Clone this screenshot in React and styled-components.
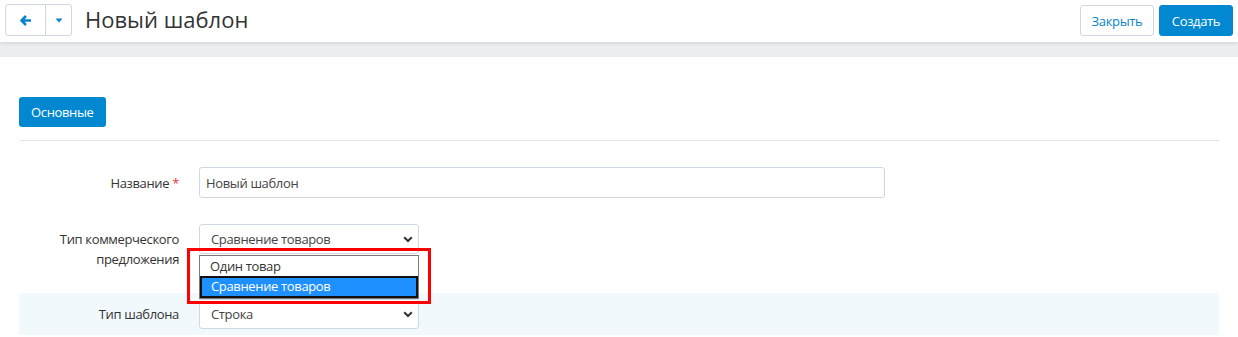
import React from 'react';
import styled, { createGlobalStyle } from 'styled-components';

const GlobalStyle = createGlobalStyle`
  body {
    margin: 0;
    background: #fff;
    font-family: "Open Sans", "Noto Sans", sans-serif;
    color: #333;
    letter-spacing: -0.35px;
  }
`;

const Page = styled.div`
  width: 1238px;
  height: 337px;
  overflow: hidden;
  background: #ebeef1;
`;

// Top bar
const TopBar = styled.header`
  display: flex;
  align-items: center;
  height: 42px;
  padding: 0 5px;
  background: #fff;
  box-shadow: 0 1px 4px rgba(0, 0, 0, 0.12);
  position: relative;
`;

const ButtonGroup = styled.div`
  display: flex;
  height: 32px;
  border: 1px solid #cfd8e2;
  border-radius: 3px;
  box-sizing: border-box;
  margin-top: -2px;
`;

const GroupButton = styled.div`
  display: flex;
  align-items: center;
  justify-content: center;
  width: ${({ wide }) => (wide ? '39px' : '25px')};
  border-left: ${({ first }) => (first ? 'none' : '1px solid #cfd8e2')};
`;

const Title = styled.h1`
  margin: -4px 0 0 13px;
  font-size: 22px;
  font-weight: 400;
  letter-spacing: 0;
  color: #333;
  flex: 1;
`;

const HeaderButton = styled.div`
  display: flex;
  align-items: center;
  justify-content: center;
  width: 74px;
  height: 31px;
  margin-left: 5px;
  margin-top: -1px;
  box-sizing: border-box;
  border-radius: 3px;
  font-size: 13px;
  border: 1px solid ${({ primary }) => (primary ? '#0288d1' : '#cfd8e2')};
  background: ${({ primary }) => (primary ? '#0288d1' : '#fff')};
  color: ${({ primary }) => (primary ? '#fff' : '#0a84c8')};
`;

const Content = styled.main`
  margin-top: 15px;
  background: #fff;
  height: 280px;
  padding: 40px 19px 0;
  box-sizing: border-box;
`;

const TabButton = styled.div`
  display: inline-flex;
  align-items: center;
  height: 30px;
  padding: 0 12px;
  border-radius: 3px;
  background: #0288d1;
  color: #fff;
  font-size: 13px;
`;

const Divider = styled.div`
  height: 1px;
  background: #dfe5ec;
  margin-top: 13px;
`;

const Row = styled.div`
  display: flex;
  align-items: flex-start;
  gap: 20px;
  padding: 6px 0;
  margin-top: ${({ gap }) => gap}px;
  background: ${({ shaded }) => (shaded ? '#f2f9fc' : 'transparent')};
`;

const Label = styled.label`
  width: 160px;
  flex-shrink: 0;
  text-align: right;
  font-size: 13px;
  line-height: 20px;
  padding-top: ${({ top }) => top}px;
  color: #333;
`;

const Required = styled.span`
  color: #e53935;
  margin-left: 3px;
`;

const TextInput = styled.div`
  width: 686px;
  height: 31px;
  box-sizing: border-box;
  border: 1px solid #cfd8e2;
  border-radius: 3px;
  padding: 0 6px;
  display: flex;
  align-items: center;
  font-size: 13px;
  color: #444;
`;

const SelectWrap = styled.div`
  position: relative;
`;

const Select = styled.div`
  width: 220px;
  height: 30px;
  box-sizing: border-box;
  border: 1px solid #cfd8e2;
  border-radius: 3px;
  padding: 0 5px 0 11px;
  display: flex;
  align-items: center;
  justify-content: space-between;
  font-size: 13px;
  color: #444;
  background: #fff;
`;

const OptionList = styled.div`
  position: absolute;
  left: 0;
  top: 31px;
  width: 220px;
  box-sizing: border-box;
  border: 1px solid #7a7a7a;
  background: #fff;
  z-index: 2;
`;

const Option = styled.div`
  height: ${({ selected }) => (selected ? '18px' : '20px')};
  line-height: ${({ selected }) => (selected ? '16px' : '20px')};
  padding: 0 ${({ selected }) => (selected ? '9px' : '10px')};
  font-size: 13px;
  color: ${({ selected }) => (selected ? '#fff' : '#333')};
  background: ${({ selected }) => (selected ? '#1e90ff' : '#fff')};
  border: ${({ selected }) => (selected ? '2px solid #111' : 'none')};
`;

const Highlight = styled.div`
  position: absolute;
  left: -12px;
  top: 24px;
  width: 244px;
  height: 56px;
  box-sizing: border-box;
  border: 3px solid #f00;
  z-index: 3;
  pointer-events: none;
`;

const Chevron = () => (
  <svg width="10" height="7" viewBox="0 0 10 7">
    <path d="M1.2 1.2 L5 5 L8.8 1.2" fill="none" stroke="#333" strokeWidth="2" />
  </svg>
);

const App = () => (
  <Page>
    <GlobalStyle />
    <TopBar>
      <ButtonGroup>
        <GroupButton wide first>
          <svg width="12" height="11" viewBox="0 0 12 11">
            <path d="M11 5.5 H2 M6 1 L1.5 5.5 L6 10" fill="none" stroke="#0a84c8" strokeWidth="2.6" strokeLinejoin="round" />
          </svg>
        </GroupButton>
        <GroupButton>
          <svg width="8" height="5" viewBox="0 0 8 5">
            <path d="M0.5 0.5 H7.5 L4 4.5 Z" fill="#0a84c8" />
          </svg>
        </GroupButton>
      </ButtonGroup>
      <Title>Новый шаблон</Title>
      <HeaderButton>Закрыть</HeaderButton>
      <HeaderButton primary>Создать</HeaderButton>
    </TopBar>
    <Content>
      <TabButton>Основные</TabButton>
      <Divider />
      <Row gap={20}>
        <Label top={6}>
          Название<Required>*</Required>
        </Label>
        <TextInput>Новый шаблон</TextInput>
      </Row>
      <Row gap={14}>
        <Label top={5}>Тип коммерческого предложения</Label>
        <SelectWrap>
          <Select>
            Сравнение товаров
            <Chevron />
          </Select>
          <OptionList>
            <Option>Один товар</Option>
            <Option selected>Сравнение товаров</Option>
          </OptionList>
          <Highlight />
        </SelectWrap>
      </Row>
      <Row gap={18} shaded>
        <Label top={5}>Тип шаблона</Label>
        <Select>
          Строка
          <Chevron />
        </Select>
      </Row>
    </Content>
  </Page>
);

export default App;
